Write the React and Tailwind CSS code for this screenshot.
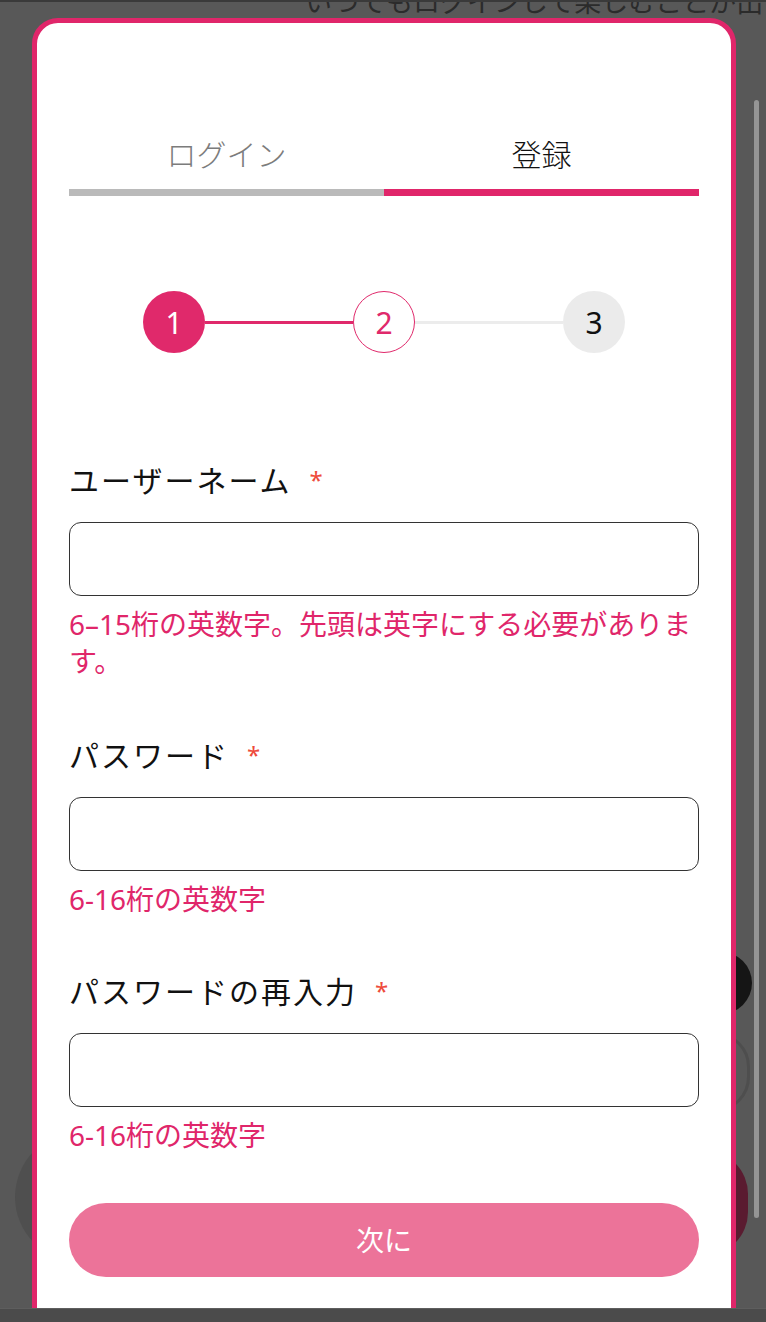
import React, { useState } from 'react';

const font = { fontFamily: '"Noto Sans", "Noto Sans CJK JP", sans-serif' };

function Field({ label, hint }) {
  const [value, setValue] = useState('');
  return (
    <div>
      <div className="flex items-center h-[40px]">
        <span className="text-[30px] tracking-[2px] text-[#111]">{label}</span>
        <span className="ml-[18px] text-[24px] text-[#ee4b3b] leading-none">*</span>
      </div>
      <input
        value={value}
        onChange={(e) => setValue(e.target.value)}
        className="mt-[22px] block w-full h-[74px] rounded-[12px] border-[1.5px] border-[#333] bg-white px-4 text-[26px] outline-none"
      />
      <p className="mt-[10px] text-[28px] leading-[37px] text-[#e0266a]">{hint}</p>
    </div>
  );
}

function Stepper() {
  return (
    <div className="mx-auto flex w-[482px] items-center">
      <div className="flex h-[62px] w-[62px] items-center justify-center rounded-full bg-[#e0296b] text-[30px] text-white">1</div>
      <div className="h-[3px] flex-1 bg-[#e0296b]" />
      <div className="flex h-[62px] w-[62px] items-center justify-center rounded-full border-[1.5px] border-[#e0296b] bg-white text-[30px] text-[#e0296b]">2</div>
      <div className="h-[3px] flex-1 bg-[#ececec]" />
      <div className="flex h-[62px] w-[62px] items-center justify-center rounded-full bg-[#ebebeb] text-[30px] text-[#111]">3</div>
    </div>
  );
}

export default function App() {
  const [tab, setTab] = useState('register');

  return (
    <div style={font} className="relative flex h-[1322px] w-[766px] flex-col overflow-hidden bg-[#585858]">
      <div className="relative flex-1 overflow-hidden border-t-2 border-[#3a3a3a]">
        {/* page underneath the dialog */}
        <p className="ml-[305px] mt-[-20px] whitespace-nowrap text-[27px] text-[#2b2b2b]">いつでもログインして楽しむことが出</p>
        <div className="absolute left-[690px] top-[950px] h-[62px] w-[62px] rounded-full bg-[#151515]" />
        <div className="absolute left-[680px] top-[1030px] h-[80px] w-[70px] rounded-full border-[3px] border-[#4e4e4e]" />
        <div className="absolute left-[660px] top-[1148px] h-[106px] w-[88px] rounded-full bg-[#5a1b30]" />
        <div className="absolute left-[15px] top-[1130px] h-[130px] w-[130px] rounded-full bg-[#4f4f4f]" />
        <div className="absolute left-[754px] top-[98px] h-[1118px] w-[5px] rounded-full bg-[#959595]" />

        {/* dialog */}
        <div className="absolute left-[32px] top-[16px] w-[704px] rounded-[26px] border-[5px] border-[#e0266a] bg-white px-[32px] pb-[80px] pt-[112px]">
          <div className="flex">
            <button onClick={() => setTab('login')} className="flex-1 text-center">
              <span className={`block h-[40px] text-[30px] font-light leading-[40px] ${tab === 'login' ? 'text-[#111]' : 'text-[#7c7c7c]'}`}>ログイン</span>
              <span className={`mt-[14px] block h-[7px] ${tab === 'login' ? 'bg-[#e0266a]' : 'bg-[#bababa]'}`} />
            </button>
            <button onClick={() => setTab('register')} className="flex-1 text-center">
              <span className={`block h-[40px] text-[30px] font-light leading-[40px] ${tab === 'register' ? 'text-[#111]' : 'text-[#7c7c7c]'}`}>登録</span>
              <span className={`mt-[14px] block h-[7px] ${tab === 'register' ? 'bg-[#e0266a]' : 'bg-[#bababa]'}`} />
            </button>
          </div>

          <div className="mt-[95px]">
            <Stepper />
          </div>

          <div className="mt-[107px]">
            <Field label="ユーザーネーム" hint="6–15桁の英数字。先頭は英字にする必要があります。" />
          </div>
          <div className="mt-[55px]">
            <Field label="パスワード" hint="6-16桁の英数字" />
          </div>
          <div className="mt-[53px]">
            <Field label="パスワードの再入力" hint="6-16桁の英数字" />
          </div>

          <button className="mt-[49px] flex h-[74px] w-full items-center justify-center rounded-full bg-[#ec7399] text-[28px] text-white">
            次に
          </button>
        </div>
      </div>
      <div className="h-[14px] border-t border-[#5e5e5e] bg-[#4b4b4b]" />
    </div>
  );
}
